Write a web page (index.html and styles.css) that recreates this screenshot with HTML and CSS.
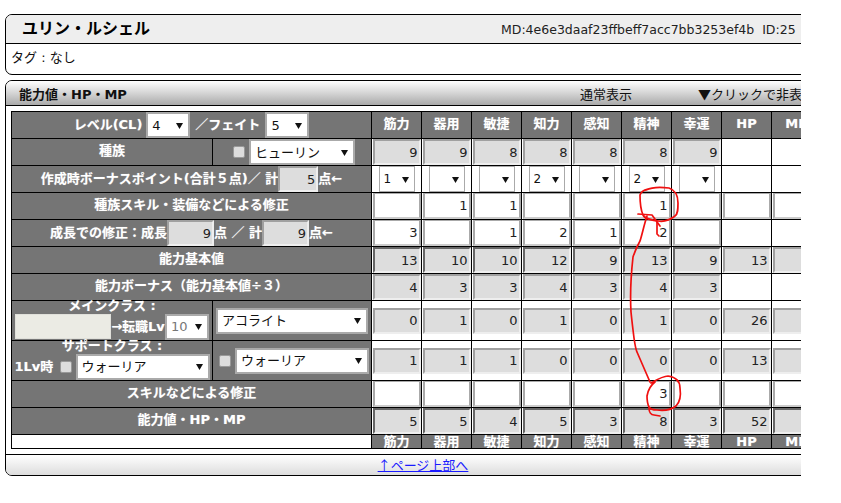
FILE: index.html
```html
<!DOCTYPE html>
<html lang="ja">
<head>
<meta charset="utf-8">
<title>ユリン・ルシェル</title>
<link rel="stylesheet" href="styles.css">
</head>
<body>
<div class="viewport">
  <section class="panel panel-top">
    <header class="name-bar">
      <h1 class="name">ユリン・ルシェル</h1>
      <span class="ids">MD:4e6e3daaf23ffbeff7acc7bb3253ef4b&nbsp;&nbsp;ID:25</span>
    </header>
    <div class="tags">タグ : なし</div>
  </section>
  <section class="panel panel-main">
    <header class="stat-bar">
      <h2 class="stat-title">能力値・HP・MP</h2>
      <span class="mode">通常表示</span>
      <span class="toggle">▼クリックで非表</span>
    </header>
    <div class="table-wrap">
      <table class="stats">
        <colgroup><col class="c1"><col class="c2"><col class="cn"><col class="cn"><col class="cn"><col class="cn"><col class="cn"><col class="cn"><col class="cn"><col class="cn"><col class="cn"></colgroup>
        <tr class="r27">
          <th colspan="2"><div class="line"><span class="lvl">レベル(CL)</span><select class="sel s44"><option>4</option></select><span class="fate">／フェイト</span><select class="sel s44"><option>5</option></select></div></th>
          <th>筋力</th><th>器用</th><th>敏捷</th><th>知力</th><th>感知</th><th>精神</th><th>幸運</th><th>HP</th><th>MP</th>
        </tr>
        <tr class="r27">
          <th>種族</th>
          <th class="shift"><div class="line"><input type="checkbox" class="chk"><select class="sel s106"><option>ヒューリン</option></select></div></th>
          <td><input class="num" value="9" readonly></td><td><input class="num" value="9" readonly></td><td><input class="num" value="8" readonly></td><td><input class="num" value="8" readonly></td><td><input class="num" value="8" readonly></td><td><input class="num" value="8" readonly></td><td><input class="num" value="9" readonly></td><td></td><td></td>
        </tr>
        <tr class="r27">
          <th colspan="2"><div class="line">作成時ボーナスポイント(合計５点)／ 計<input class="num n40" value="5" readonly>点←</div></th>
          <td><select class="sel pick"><option>1</option></select></td><td><select class="sel pick"><option></option></select></td><td><select class="sel pick"><option></option></select></td><td><select class="sel pick"><option>2</option></select></td><td><select class="sel pick"><option></option></select></td><td><select class="sel pick"><option>2</option></select></td><td><select class="sel pick"><option></option></select></td><td></td><td></td>
        </tr>
        <tr class="r27">
          <th colspan="2">種族スキル・装備などによる修正</th>
          <td><input class="num edit" readonly></td><td><input class="num edit" value="1" readonly></td><td><input class="num edit" value="1" readonly></td><td><input class="num edit" readonly></td><td><input class="num edit" readonly></td><td><input class="num edit" value="1" readonly></td><td><input class="num edit" readonly></td><td><input class="num edit" readonly></td><td><input class="num edit" readonly></td>
        </tr>
        <tr class="r27">
          <th colspan="2"><div class="line">成長での修正：成長<input class="num n47" value="9" readonly>点 ／ 計<input class="num n47" value="9" readonly>点←</div></th>
          <td><input class="num edit" value="3" readonly></td><td><input class="num edit" readonly></td><td><input class="num edit" value="1" readonly></td><td><input class="num edit" value="2" readonly></td><td><input class="num edit" value="1" readonly></td><td><input class="num edit" value="2" readonly></td><td><input class="num edit" readonly></td><td></td><td></td>
        </tr>
        <tr class="r27">
          <th colspan="2">能力基本値</th>
          <td><input class="num strong" value="13" readonly></td><td><input class="num strong" value="10" readonly></td><td><input class="num strong" value="10" readonly></td><td><input class="num strong" value="12" readonly></td><td><input class="num strong" value="9" readonly></td><td><input class="num strong" value="13" readonly></td><td><input class="num strong" value="9" readonly></td><td><input class="num" value="13" readonly></td><td><input class="num" readonly></td>
        </tr>
        <tr class="r27">
          <th colspan="2">能力ボーナス（能力基本値÷３）</th>
          <td><input class="num" value="4" readonly></td><td><input class="num" value="3" readonly></td><td><input class="num" value="3" readonly></td><td><input class="num" value="4" readonly></td><td><input class="num" value="3" readonly></td><td><input class="num" value="4" readonly></td><td><input class="num" value="3" readonly></td><td></td><td></td>
        </tr>
        <tr class="r40">
          <th><div class="stack"><span class="stack-label">メインクラス :</span><div class="line"><input class="blank" readonly><span class="lv">→転職Lv</span><select class="sel s44 muted"><option>10</option></select></div></div></th>
          <th><div class="line"><select class="sel s152"><option>アコライト</option></select></div></th>
          <td><input class="num" value="0" readonly></td><td><input class="num" value="1" readonly></td><td><input class="num" value="0" readonly></td><td><input class="num" value="1" readonly></td><td><input class="num" value="0" readonly></td><td><input class="num" value="1" readonly></td><td><input class="num" value="0" readonly></td><td><input class="num" value="26" readonly></td><td><input class="num" readonly></td>
        </tr>
        <tr class="r40">
          <th><div class="stack"><span class="stack-label">サポートクラス :</span><div class="line"><span class="lv1">1Lv時</span><input type="checkbox" class="chk"><select class="sel s134"><option>ウォーリア</option></select></div></div></th>
          <th class="shift"><div class="line"><input type="checkbox" class="chk"><select class="sel s134"><option>ウォーリア</option></select></div></th>
          <td><input class="num" value="1" readonly></td><td><input class="num" value="1" readonly></td><td><input class="num" value="1" readonly></td><td><input class="num" value="0" readonly></td><td><input class="num" value="0" readonly></td><td><input class="num" value="0" readonly></td><td><input class="num" value="0" readonly></td><td><input class="num" value="13" readonly></td><td><input class="num" readonly></td>
        </tr>
        <tr class="r27">
          <th colspan="2">スキルなどによる修正</th>
          <td><input class="num edit" readonly></td><td><input class="num edit" readonly></td><td><input class="num edit" readonly></td><td><input class="num edit" readonly></td><td><input class="num edit" readonly></td><td><input class="num edit" value="3" readonly></td><td><input class="num edit" readonly></td><td><input class="num edit" readonly></td><td><input class="num edit" readonly></td>
        </tr>
        <tr class="r27">
          <th colspan="2">能力値・HP・MP</th>
          <td><input class="num strong" value="5" readonly></td><td><input class="num strong" value="5" readonly></td><td><input class="num strong" value="4" readonly></td><td><input class="num strong" value="5" readonly></td><td><input class="num strong" value="3" readonly></td><td><input class="num strong" value="8" readonly></td><td><input class="num strong" value="3" readonly></td><td><input class="num strong" value="52" readonly></td><td><input class="num strong" readonly></td>
        </tr>
        <tr class="r14">
          <td colspan="2"></td>
          <th>筋力</th><th>器用</th><th>敏捷</th><th>知力</th><th>感知</th><th>精神</th><th>幸運</th><th>HP</th><th>MP</th>
        </tr>
      </table>
    </div>
    <footer class="foot"><a class="top-link" href="#">↑ページ上部へ</a></footer>
  </section>
  <svg class="ink" width="801" height="503" viewBox="0 0 801 503" aria-hidden="true">
    <path d="M646 190 C652 187 662 187 669 188 C675 190 678 196 678 203 C678 209 678 214 675 216 C670 220 664 222 658 221 C651 220 645 219 643 215 C640 208 640 200 640 195 C641 191 644 190 648 189"/>
    <path d="M638 214 L652 215 L660 226"/>
    <path d="M657 222 L657 234 L659 236"/>
    <path d="M647 216 C644 225 642 235 640 241 C636 248 634 254 633 257 C631 275 630 295 631 312 C632 322 633 330 634 338 C635 345 636 350 637 352 L650 382"/>
    <path d="M651 383 C658 379 663 376 668 376 C675 377 680 381 680 388 C681 395 680 402 676 406 C671 410 665 411 657 410 C652 410 650 409 649 407 C647 403 647 399 647 396 C648 390 651 385 655 382"/>
    <path d="M649 408 C649 412 651 415 654 415 L660 416"/>
  </svg>
</div>
</body>
</html>
```
FILE: styles.css
```css
* { box-sizing: border-box; }
html, body { margin: 0; padding: 0; background: #fff; }
body {
  font-family: "DejaVu Sans", "Noto Sans CJK JP", sans-serif;
  font-size: 13px;
  color: #111;
}
.viewport {
  position: relative;
  width: 801px;
  height: 503px;
  overflow: hidden;
  padding: 14px 0 0 5px;
}
.panel {
  width: 836px;
  border: 1px solid #000;
  border-radius: 7px 0 0 7px;
  overflow: hidden;
}
.panel-top { height: 61px; }
.panel-main { height: 396px; margin-top: 5px; }
.name-bar {
  height: 29px;
  display: flex;
  align-items: center;
  background: #eee;
  border-bottom: 1px solid #000;
  padding-left: 16px;
}
.name { margin: 0; width: 479px; font-size: 16px; font-weight: bold; line-height: 20px; color: #000; }
.ids { font-size: 12.5px; white-space: nowrap; color: #222; }
.tags { height: 30px; line-height: 28px; padding-left: 5px; font-size: 13px; }
.stat-bar {
  height: 25px;
  display: flex;
  align-items: center;
  border-bottom: 1px solid #000;
  background: linear-gradient(#fff, #aaa);
  padding-left: 13px;
}
.stat-title { margin: 0; width: 561px; font-size: 13px; font-weight: bold; color: #111; }
.mode { width: 118px; }
.toggle { white-space: nowrap; font-family: "Noto Sans CJK JP", sans-serif; }
.table-wrap { padding: 5px 0 0 5px; height: 348px; }
.stats {
  table-layout: fixed;
  width: 811px;
  border-collapse: separate;
  border-spacing: 0;
  border-top: 1px solid #000;
  border-left: 1px solid #000;
}
.c1 { width: 201px; }
.c2 { width: 159px; }
.cn { width: 50px; }
.r27 { height: 27px; }
.r40 { height: 40px; }
.r14 { height: 14px; }
.stats th, .stats td {
  padding: 0;
  border-right: 1px solid #000;
  border-bottom: 1px solid #000;
  text-align: center;
  vertical-align: middle;
  overflow: visible;
}
.stats th {
  background: #757575;
  color: #fff;
  font-size: 13px;
  font-weight: bold;
  line-height: 14px;
  white-space: nowrap;
  text-shadow: 0 0 1px rgba(255, 255, 255, 0.45);
}
.r27 th { vertical-align: top; line-height: 24px; }
.r14 th { line-height: 13px; height: 14px; }
.shift { padding-left: 4px !important; }
.line { display: flex; align-items: center; justify-content: center; }
.lvl { margin-right: 4px; }
.fate { margin: 0 5px; }
.stack { display: flex; flex-direction: column; align-items: center; margin-top: -1px; }
.stack-label { height: 13px; line-height: 10px; }
.num {
  display: block;
  width: 48px;
  height: 26px;
  margin: 0 auto;
  padding: 0 1px 0 0;
  border-style: solid;
  border-width: 2px;
  border-color: #a0a0a0 #eee #eee #a0a0a0;
  background: #ddd;
  font: 13px "DejaVu Sans", sans-serif;
  color: #222;
  text-align: right;
  outline: none;
}
.edit { background: #fff; border-color: #aaa #aaa #ccc #aaa; border-width: 1px 2px 2px 2px; }
.strong { border-color: #666 #eee #eee #666; }
.n40 { width: 40px; margin: 0; }
.n47 { width: 47px; margin: 0; }
.blank {
  width: 96px;
  height: 25px;
  border: 1px solid #e0e0da;
  background: #ebebe4;
  padding: 0;
}
.lv { width: 54px; white-space: nowrap; text-align: center; }
.lv1 { width: 37px; margin-right: 8px; }
.chk {
  appearance: none;
  -webkit-appearance: none;
  flex: none;
  width: 12px;
  height: 12px;
  margin: 0 4px 0 0;
  border: 1px solid #999;
  border-radius: 2px;
  background: #ddd;
}
.sel {
  appearance: none;
  -webkit-appearance: none;
  display: block;
  flex: none;
  height: 26px;
  margin: 0;
  padding: 0 0 0 4px;
  border: 2px solid #aaa;
  border-radius: 0;
  font: 13px "DejaVu Sans", "Noto Sans CJK JP", sans-serif;
  color: #111;
  background: #fff url("data:image/svg+xml,%3Csvg xmlns='http://www.w3.org/2000/svg' width='7' height='7'%3E%3Cpath d='M0 1h7L3.5 7z' fill='%23111'/%3E%3C/svg%3E") no-repeat right 5px center;
}
.s44 { width: 44px; }
.s106 { width: 106px; }
.s134 { width: 134px; }
.s152 { width: 152px; }
.pick {
  width: 36px;
  height: 26px;
  margin: 0 auto;
  border-width: 1px;
  font-size: 12px;
  padding-left: 4px;
}
.muted { color: #777; }
.foot {
  height: 21px;
  margin-top: 0;
  border-top: 1px solid #000;
  background: linear-gradient(#fff, #ddd);
  text-align: center;
  line-height: 19px;
  font-size: 13px;
  font-family: "Noto Sans CJK JP", sans-serif;
}
.top-link { color: #1a1aff; }
.ink { position: absolute; left: 0; top: 0; pointer-events: none; }
.ink path { fill: none; stroke: #f01010; stroke-width: 1.7; stroke-linejoin: round; stroke-linecap: round; }
```
